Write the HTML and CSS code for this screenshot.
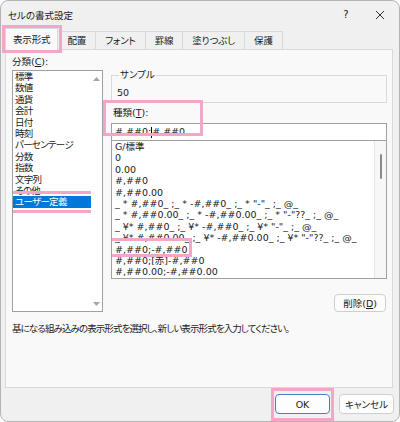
FILE: index.html
```html
<!DOCTYPE html>
<html lang="ja">
<head>
  <meta charset="UTF-8">
  <title>セルの書式設定</title>
  <link rel="stylesheet" href="styles.css">
</head>
<body>
  <div class="window">
    <div class="titlebar">
      <span class="title">セルの書式設定</span>
      <span class="help">?</span>
      <span class="close">
        <svg width="10" height="10" viewBox="0 0 10 10"><path d="M1 1 L9 9 M9 1 L1 9" stroke="#303030" stroke-width="1" fill="none"/></svg>
      </span>
    </div>

    <div class="tabs">
      <div class="tab active mark mark-tab">表示形式</div>
      <div class="tab">配置</div>
      <div class="tab">フォント</div>
      <div class="tab">罫線</div>
      <div class="tab">塗りつぶし</div>
      <div class="tab">保護</div>
    </div>

    <div class="panel">
      <div class="columns">
        <div class="category">
          <div class="label">分類(<u>C</u>):</div>
          <div class="listbox">
            <ul class="items">
              <li>標準</li>
              <li>数値</li>
              <li>通貨</li>
              <li>会計</li>
              <li>日付</li>
              <li>時刻</li>
              <li>パーセンテージ</li>
              <li>分数</li>
              <li>指数</li>
              <li>文字列</li>
              <li>その他</li>
              <li class="selected mark mark-custom">ユーザー定義</li>
            </ul>
            <div class="arrows">
              <svg width="7" height="4" viewBox="0 0 7 4"><path d="M0 4 L3.5 0 L7 4 Z" fill="#a6a6a6"/></svg>
              <svg width="7" height="4" viewBox="0 0 7 4"><path d="M0 0 L3.5 4 L7 0 Z" fill="#a6a6a6"/></svg>
            </div>
          </div>
        </div>

        <div class="detail">
          <fieldset class="sample">
            <legend>サンプル</legend>
            <div class="sample-value">50</div>
          </fieldset>

          <div class="type-field">
            <div class="label">種類(<u>T</u>):</div>
            <div class="input">#,##0;<span class="caret"></span>#,##0</div>
            <span class="mark-type"></span>
          </div>

          <div class="format-list">
            <ul class="items">
              <li>G/標準</li>
              <li>0</li>
              <li>0.00</li>
              <li>#,##0</li>
              <li>#,##0.00</li>
              <li>_ * #,##0_ ;_ * -#,##0_ ;_ * "-"_ ;_ @_</li>
              <li>_ * #,##0.00_ ;_ * -#,##0.00_ ;_ * "-"??_ ;_ @_</li>
              <li>_ ¥* #,##0_ ;_ ¥* -#,##0_ ;_ ¥* "-"_ ;_ @_</li>
              <li>_ ¥* #,##0.00_ ;_ ¥* -#,##0.00_ ;_ ¥* "-"??_ ;_ @_</li>
              <li><span class="mark mark-format">#,##0;-#,##0</span></li>
              <li>#,##0;[赤]-#,##0</li>
              <li>#,##0.00;-#,##0.00</li>
            </ul>
            <div class="scrollbar"><div class="thumb"></div></div>
          </div>

          <div class="actions">
            <button class="button">削除(<u>D</u>)</button>
          </div>
        </div>
      </div>

      <p class="hint">基になる組み込みの表示形式を選択し、新しい表示形式を入力してください。</p>
    </div>

    <div class="footer">
      <button class="button default mark mark-ok">OK</button>
      <button class="button">キャンセル</button>
    </div>
  </div>
</body>
</html>
```

FILE: styles.css
```css
:root {
  --window-bg: #f0f0f0;
  --panel-bg: #f9f9f9;
  --text-color: #1a1a1a;
  --box-border: #a0a0a0;
  --light-border: #d9d9d9;
  --accent: #0078d7;
  --mark: #f2a6c8;
}

* {
  margin: 0;
  padding: 0;
  box-sizing: border-box;
}

body {
  font-family: "DejaVu Sans", "Noto Sans CJK JP", sans-serif;
  font-size: 9.5px;
  font-feature-settings: "palt";
  color: var(--text-color);
  background: #ffffff;
}

.window {
  width: 400px;
  height: 422px;
  background: var(--window-bg);
  border: 1px solid #b4b4b4;
  border-radius: 8px;
  display: flex;
  flex-direction: column;
  overflow: hidden;
}

/* annotation boxes drawn over the dialog */
.mark {
  position: relative;
}

.mark::after,
.mark-type {
  content: '';
  position: absolute;
  border: 3px solid var(--mark);
  pointer-events: none;
}

.titlebar {
  height: 27px;
  display: flex;
  align-items: center;
  padding-left: 7px;
}

.title {
  flex: 1;
}

.help {
  width: 30px;
  text-align: center;
  font-size: 10px;
}

.close {
  width: 38px;
  display: flex;
  justify-content: center;
}

.tabs {
  height: 21px;
  display: flex;
  align-items: flex-end;
  padding-left: 4px;
  position: relative;
  z-index: 1;
}

.tab {
  height: 18px;
  line-height: 17px;
  padding: 0 9px;
  letter-spacing: -0.15px;
  border: 1px solid var(--light-border);
  border-bottom: none;
  margin-right: -1px;
  background: var(--window-bg);
}

.tab.active {
  height: 22px;
  line-height: 21px;
  margin-bottom: -1px;
  padding: 0 7px;
  background: var(--panel-bg);
}

.mark-tab::after {
  top: -4px;
  left: -4px;
  right: -5px;
  bottom: -3px;
}

.panel {
  height: 339px;
  margin: 0 6px 0 4px;
  background: var(--panel-bg);
  border: 1px solid var(--light-border);
  padding: 6px 5px 0 6px;
}

.columns {
  display: grid;
  grid-template-columns: 91px 1fr;
  gap: 8px;
}

.label {
  height: 12px;
  line-height: 12px;
}

.category .label {
  margin-bottom: 2px;
}

.listbox {
  height: 242px;
  background: #ffffff;
  border: 1px solid var(--box-border);
  display: flex;
}

.items {
  list-style: none;
  flex: 1;
  overflow: hidden;
}

.items li {
  height: 11.4px;
  line-height: 11.4px;
  padding-left: 2px;
  white-space: nowrap;
}

.listbox .items li {
  letter-spacing: -0.7px;
}

.items li.selected {
  background: var(--accent);
  color: #ffffff;
}

.mark-custom::after {
  top: -5px;
  left: -6px;
  right: -5px;
  bottom: -5px;
}

.arrows {
  width: 11px;
  display: flex;
  flex-direction: column;
  justify-content: space-between;
  align-items: center;
  padding: 6px 0 5px;
}

.detail {
  padding-top: 13px;
}

.sample {
  border: 1px solid var(--light-border);
  padding: 6px 5px 3px;
  height: 34px;
}

.sample legend {
  line-height: 12px;
  margin-left: 2px;
  padding: 0 1px;
}

.sample-value {
  line-height: 12px;
}

.type-field {
  position: relative;
  margin-top: 4px;
}

.type-field .label {
  padding-left: 2px;
  margin-bottom: 4px;
}

.input {
  height: 18px;
  line-height: 16px;
  background: #ffffff;
  border: 1px solid var(--box-border);
  padding-left: 3px;
  display: flex;
  align-items: center;
}

.caret {
  display: inline-block;
  width: 1px;
  height: 11px;
  background: #000000;
}

.mark-type {
  top: -7px;
  left: -8px;
  width: 100px;
  height: 36px;
}

.format-list {
  height: 138px;
  background: #ffffff;
  border: 1px solid var(--box-border);
  border-top: none;
  display: flex;
}

.format-list .items li {
  padding-left: 3px;
}

.mark-format {
  display: inline-block;
}

.mark-format::after {
  top: -6px;
  left: -6px;
  right: -4px;
  bottom: -2px;
}

.scrollbar {
  width: 12px;
  background: #f7f7f7;
  border-left: 1px solid #e6e6e6;
  padding-top: 13px;
  display: flex;
  justify-content: center;
}

.thumb {
  width: 2px;
  height: 25px;
  background: #8a8a8a;
  border-radius: 1px;
}

.actions {
  display: flex;
  justify-content: flex-end;
  margin-top: 15px;
  padding-right: 1px;
}

.button {
  font: inherit;
  color: inherit;
  height: 18px;
  padding: 0 8px;
  background: #fdfdfd;
  border: 1px solid #cfcfcf;
  border-radius: 4px;
}

.hint {
  margin-top: 11px;
  line-height: 12px;
  letter-spacing: -0.9px;
}

.footer {
  flex: 1;
  display: flex;
  justify-content: flex-end;
  align-items: flex-start;
  gap: 9px;
  padding: 6px 5px 0 0;
}

.footer .button {
  width: 55px;
  height: 20px;
  padding: 0;
}

.button.default {
  border-color: #4d7cc2;
}

.mark-ok::after {
  top: -7px;
  left: -5px;
  right: -5px;
  bottom: -8px;
}
```
